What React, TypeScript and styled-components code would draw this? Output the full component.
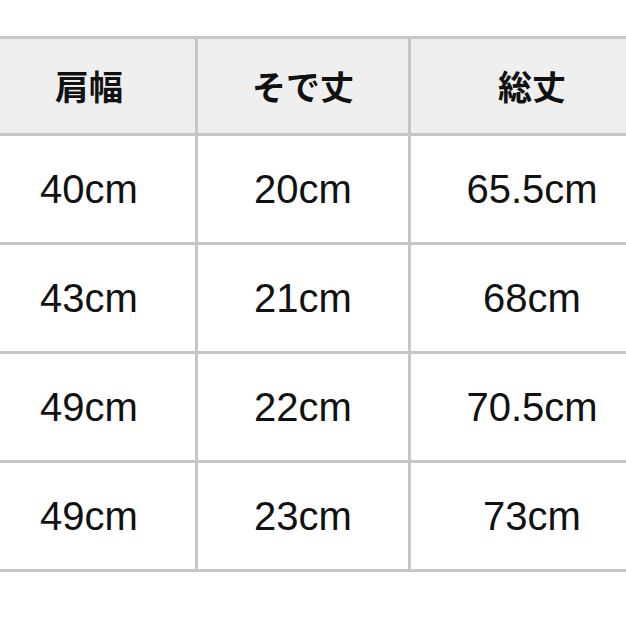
import React from 'react';
import styled, { createGlobalStyle } from 'styled-components';

const GlobalStyle = createGlobalStyle`
    html, body {
        margin: 0;
        padding: 0;
        background: #ffffff;
        overflow: hidden;
    }
`

const Page =
    styled.div`
        width: 626px;
        height: 626px;
        overflow: hidden;
        padding-top: 36px;
        box-sizing: border-box;
    `

const SizeGrid =
    styled.div`
        display: grid;
        grid-template-columns: 212px 210px 242px;
        grid-auto-rows: 106px;
        grid-template-rows: 94px;
        gap: 3px;
        width: 670px;
        margin-left: -17px;
        background: #c6c6c6;
        border-top: 3px solid #c6c6c6;
        border-bottom: 3px solid #c6c6c6;
    `

const Cell =
    styled.div<{ $head?: boolean }>`
        display: flex;
        align-items: center;
        justify-content: center;
        background: ${p => (p.$head ? '#efefef' : '#ffffff')};
        color: #111111;
        font-family: ${p => (p.$head
            ? '"Noto Sans CJK JP", sans-serif'
            : '"Liberation Sans", Arial, sans-serif')};
        font-size: ${p => (p.$head ? '34px' : '40px')};
        font-weight: ${p => (p.$head ? 700 : 400)};
        line-height: 1;
    `

const heads = ['肩幅', 'そで丈', '総丈'];

const rows = [
    ['40cm', '20cm', '65.5cm'],
    ['43cm', '21cm', '68cm'],
    ['49cm', '22cm', '70.5cm'],
    ['49cm', '23cm', '73cm'],
];

export default function App() {
    return (
        <>
            <GlobalStyle />
            <Page>
                <SizeGrid>
                    {heads.map(h => (
                        <Cell key={h} $head>{h}</Cell>
                    ))}
                    {rows.map((r, i) =>
                        r.map((v, j) => <Cell key={`${i}-${j}`}>{v}</Cell>)
                    )}
                </SizeGrid>
            </Page>
        </>
    );
}
